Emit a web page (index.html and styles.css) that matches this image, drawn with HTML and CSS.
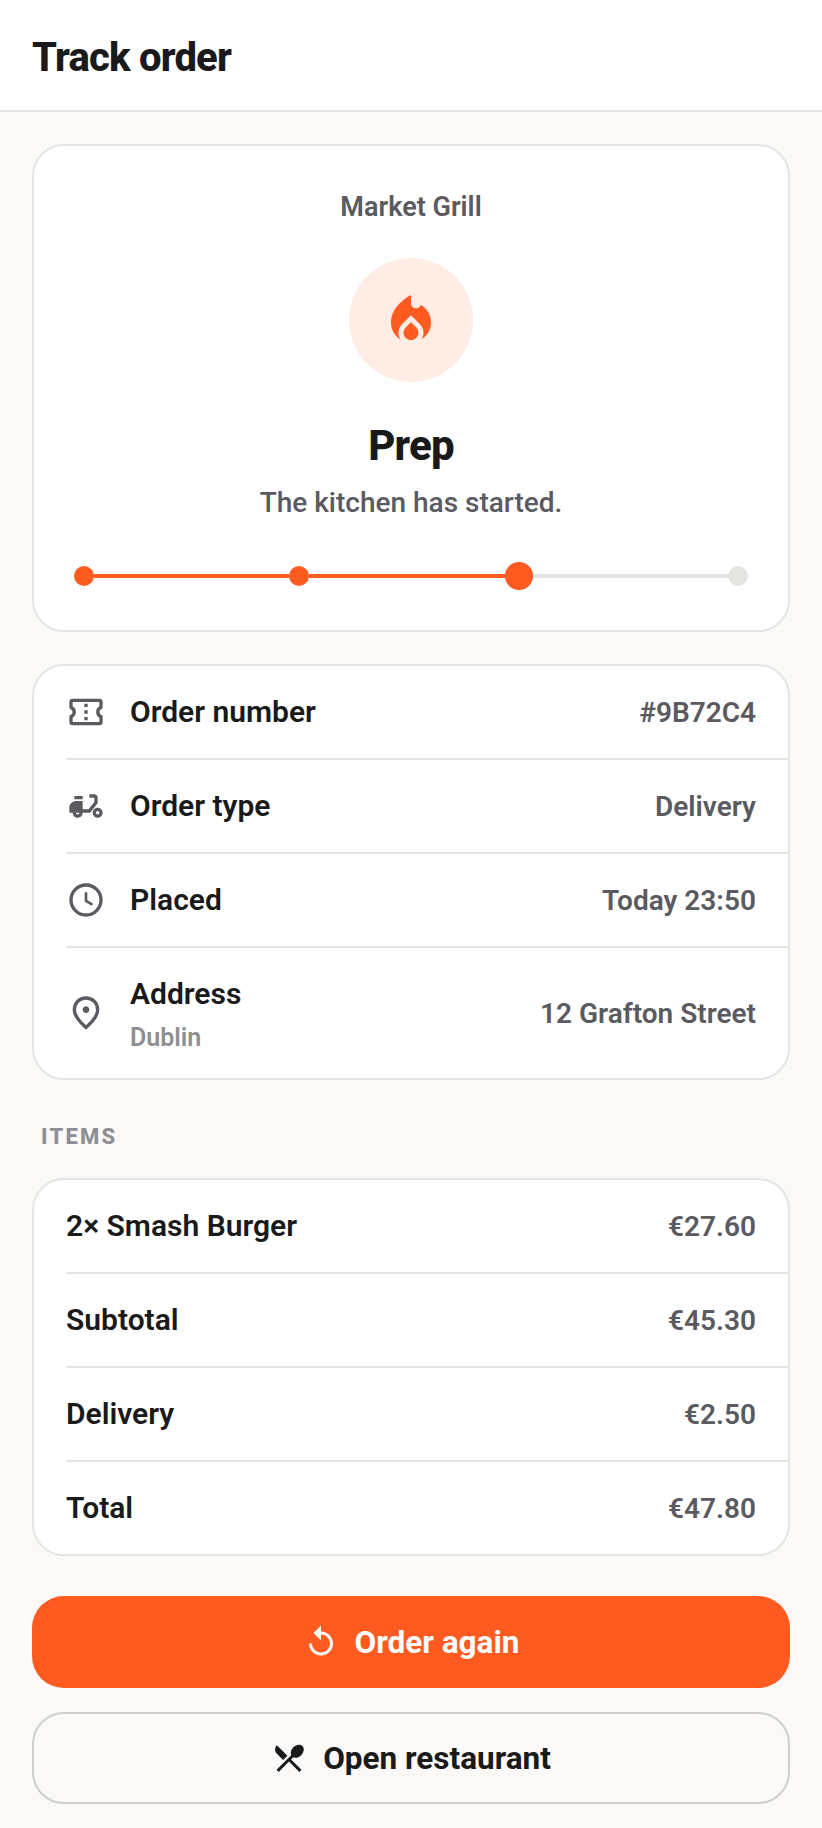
FILE: index.html
```html
<!DOCTYPE html>
<html lang="en">
<head>
<meta charset="utf-8">
<title>Track order</title>
<link rel="stylesheet" href="styles.css">
</head>
<body>
<header class="topbar"><h1 class="topbar-title">Track order</h1></header>
<main class="content">
  <section class="card status">
    <div class="status-name">Market Grill</div>
    <div class="status-icon">
      <svg width="60" height="60" viewBox="0 0 24 24" fill="#ff5a1f"><path d="M12 12.9l-2.13 2.09C9.31 15.55 9 16.28 9 17.06 9 18.68 10.35 20 12 20s3-1.32 3-2.94c0-.78-.31-1.52-.87-2.07L12 12.9z"/><path d="M16 6l-.44.55C14.38 8.02 12 7.19 12 5.3V2S4 6 4 13c0 2.92 1.56 5.47 3.89 6.86-.56-.79-.89-1.76-.89-2.8 0-1.32.52-2.56 1.47-3.5L12 10.1l3.53 3.47c.95.93 1.47 2.17 1.47 3.5 0 1.02-.31 1.96-.85 2.75 1.89-1.15 3.29-3.06 3.71-5.3.66-3.52-1.03-6.96-3.86-8.52z"/></svg>
    </div>
    <h2 class="status-title">Prep</h2>
    <p class="status-text">The kitchen has started.</p>
    <div class="progress">
      <span class="dot on"></span><span class="bar on"></span>
      <span class="dot on"></span><span class="bar on"></span>
      <span class="dot big"></span><span class="bar"></span>
      <span class="dot"></span>
    </div>
  </section>

  <section class="card">
    <div class="row">
      <svg class="row-icon" width="40" height="40" viewBox="0 0 24 24" fill="#5a5a60"><path fill="none" stroke="#5a5a60" stroke-width="2" stroke-linejoin="round" d="M4 5h16a1 1 0 0 1 1 1v3.2a3 3 0 0 0 0 5.6V18a1 1 0 0 1-1 1H4a1 1 0 0 1-1-1v-3.2a3 3 0 0 0 0-5.6V6a1 1 0 0 1 1-1z"/><path d="M11 7h2v2h-2zm0 4h2v2h-2zm0 4h2v2h-2z"/></svg>
      <div class="row-label">Order number</div>
      <div class="row-value">#9B72C4</div>
    </div>
    <div class="row">
      <svg class="row-icon" width="40" height="40" viewBox="0 0 24 24" fill="#5a5a60"><path d="M19 7c0-1.1-.9-2-2-2h-3v2h3v2.65L13.52 14H10V9H6c-2.21 0-4 1.79-4 4v3h2c0 1.66 1.34 3 3 3s3-1.34 3-3h4.48L19 10.35V7zM7 17c-.55 0-1-.45-1-1h2c0 .55-.45 1-1 1z"/><path d="M5 6h5v2H5zm14 7c-1.66 0-3 1.34-3 3s1.34 3 3 3 3-1.34 3-3-1.34-3-3-3zm0 4c-.55 0-1-.45-1-1s.45-1 1-1 1 .45 1 1-.45 1-1 1z"/></svg>
      <div class="row-label">Order type</div>
      <div class="row-value">Delivery</div>
    </div>
    <div class="row">
      <svg class="row-icon" width="40" height="40" viewBox="0 0 24 24" fill="none" stroke="#5a5a60"><circle cx="12" cy="12" r="9" stroke-width="2"/><path d="M12 8v4.5l3.3 2" stroke-width="1.6" stroke-linecap="round" stroke-linejoin="round"/></svg>
      <div class="row-label">Placed</div>
      <div class="row-value">Today 23:50</div>
    </div>
    <div class="row row-tall">
      <svg class="row-icon" width="40" height="40" viewBox="0 -960 960 960" fill="#5a5a60"><path d="M480-480q33 0 56.5-23.5T560-560q0-33-23.5-56.5T480-640q-33 0-56.5 23.5T400-560q0 33 23.5 56.5T480-480Zm0 294q122-112 181-203.5T720-552q0-109-69.5-178.5T480-800q-101 0-170.5 69.5T240-552q0 71 59 162.5T480-186Zm0 106Q319-217 239.5-334.5T160-552q0-150 96.5-239T480-880q127 0 223.5 89T800-552q0 100-79.5 217.5T480-80Z"/></svg>
      <div class="row-label row-label-stack">Address<div class="row-sub">Dublin</div></div>
      <div class="row-value">12 Grafton Street</div>
    </div>
  </section>

  <div class="section-label">ITEMS</div>

  <section class="card">
    <div class="row"><div class="row-label">2× Smash Burger</div><div class="row-value">€27.60</div></div>
    <div class="row"><div class="row-label">Subtotal</div><div class="row-value">€45.30</div></div>
    <div class="row"><div class="row-label">Delivery</div><div class="row-value">€2.50</div></div>
    <div class="row"><div class="row-label">Total</div><div class="row-value">€47.80</div></div>
  </section>

  <div class="actions">
    <button class="btn btn-primary">
      <svg width="36" height="36" viewBox="0 0 24 24" fill="#fff"><path d="M12 5V1L7 6l5 5V7c3.31 0 6 2.69 6 6s-2.69 6-6 6-6-2.69-6-6H4c0 4.42 3.58 8 8 8s8-3.58 8-8-3.58-8-8-8z"/></svg>
      Order again
    </button>
    <button class="btn btn-secondary">
      <svg width="36" height="36" viewBox="0 0 24 24" fill="#1a1a1a"><path d="M8.1 13.34l2.83-2.83L3.91 3.5c-1.56 1.56-1.56 4.09 0 5.66l4.19 4.18zm6.78-1.81c1.53.71 3.68.21 5.27-1.38 1.91-1.91 2.28-4.65.81-6.12-1.46-1.46-4.2-1.1-6.12.81-1.59 1.59-2.09 3.74-1.38 5.27L3.7 19.87l1.41 1.41L12 14.41l6.88 6.88 1.41-1.41L13.41 13l1.47-1.47z"/></svg>
      Open restaurant
    </button>
  </div>
</main>
</body>
</html>
```
FILE: styles.css
```css
* { box-sizing: border-box; }
html, body { margin: 0; padding: 0; }
body {
  width: 822px;
  min-height: 1828px;
  background: #faf9f7;
  font-family: Roboto, "Liberation Sans", sans-serif;
  color: #1a1a1a;
}
.topbar {
  height: 112px;
  background: #fff;
  border-bottom: 2px solid #e5e5e2;
  padding: 5px 32px 0;
  display: flex;
  align-items: center;
}
.topbar-title { margin: 0; font-size: 40px; font-weight: 800; letter-spacing: -0.8px; line-height: 1; }
.content { padding: 32px 32px 24px; display: flex; flex-direction: column; }
.card {
  background: #fff;
  border: 2px solid #e5e5e2;
  border-radius: 32px;
  overflow: hidden;
}
.status {
  height: 488px;
  padding: 45px 40px 0;
  display: flex;
  flex-direction: column;
  align-items: center;
  margin-bottom: 32px;
}
.status-name { font-size: 27px; font-weight: 600; color: #5a5a60; line-height: 32px; }
.status-icon {
  width: 124px; height: 124px;
  margin-top: 35px;
  border-radius: 50%;
  background: #ffece5;
  display: flex; align-items: center; justify-content: center;
}
.status-title { margin: 39px 0 0; font-size: 42px; font-weight: 800; line-height: 50px; letter-spacing: -0.8px; }
.status-text { margin: 14px 0 0; font-size: 28px; font-weight: 500; color: #5a5a60; line-height: 36px; }
.progress { width: 100%; display: flex; align-items: center; margin-top: 41px; height: 28px; }
.dot { width: 20px; height: 20px; border-radius: 50%; background: #e5e5e2; flex: none; }
.dot.on, .dot.big { background: #ff5a1f; }
.dot.big { width: 28px; height: 28px; }
.bar { flex: 1; height: 4px; background: #e5e5e2; }
.bar.on { background: #ff5a1f; }
.row {
  height: 94px;
  margin-left: 32px;
  padding-right: 32px;
  display: flex;
  align-items: center;
  border-bottom: 2px solid #e5e5e2;
}
.row:last-child { border-bottom: 0; height: 92px; }
.row-tall, .row-tall:last-child { height: 130px; }
.row-icon { flex: none; margin-right: 24px; }
.row-label { flex: 1; font-size: 30px; font-weight: 600; line-height: 36px; }
.row-label-stack { padding-top: 3px; }
.row-sub { font-size: 25px; font-weight: 600; color: #8e8e93; line-height: 30px; margin-top: 11px; }
.row-value { font-size: 28px; font-weight: 600; color: #5a5a60; }
.section-label {
  margin: 44px 0 28px 9px;
  font-size: 22px; font-weight: 800; letter-spacing: 2.2px; color: #8e8e93; line-height: 26px;
}
.actions { display: flex; flex-direction: column; gap: 24px; margin-top: 40px; }
.btn {
  width: 100%; height: 92px;
  border-radius: 32px;
  font: 700 31.5px Roboto, "Liberation Sans", sans-serif;
  display: flex; align-items: center; justify-content: center; gap: 16px;
}
.btn-primary { background: #ff5a1f; border: 0; color: #fff; }
.btn-secondary { background: #faf9f7; border: 2px solid #cfcec9; color: #1a1a1a; }
```
